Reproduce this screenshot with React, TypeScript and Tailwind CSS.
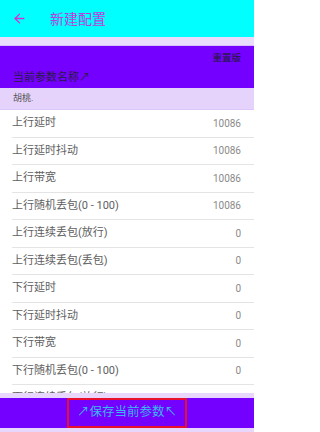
import { ArrowLeft } from "lucide-react";

const rows: [string, string][] = [
  ["上行延时", "10086"],
  ["上行延时抖动", "10086"],
  ["上行带宽", "10086"],
  ["上行随机丢包(0 - 100)", "10086"],
  ["上行连续丢包(放行)", "0"],
  ["上行连续丢包(丢包)", "0"],
  ["下行延时", "0"],
  ["下行延时抖动", "0"],
  ["下行带宽", "0"],
  ["下行随机丢包(0 - 100)", "0"],
  ["下行连续丢包(放行)", "0"],
];

export default function App() {
  return (
    <div
      className="w-[254px] h-[432px] flex flex-col bg-white overflow-hidden"
      style={{ fontFamily: "Roboto, 'Noto Sans CJK SC', sans-serif" }}
    >
      {/* toolbar */}
      <div className="h-[37px] shrink-0 bg-[#00ffff] flex items-center">
        <ArrowLeft size={15} strokeWidth={2.2} className="ml-[12px] text-[#d62ed6]" />
        <span className="ml-[23px] text-[14px] text-[#b83ee0] leading-none">新建配置</span>
      </div>
      <div className="h-[9px] shrink-0 bg-[#eadcfd] border-b border-[#d7c0fb]" />

      {/* name block */}
      <div className="h-[42px] shrink-0 bg-[#7400ff] flex flex-col px-[13px]">
        <div className="self-end mt-[7px] text-[9.5px] leading-none text-[#1c1c30]">重置版</div>
        <div className="mt-[9px] text-[11px] leading-none text-[#2a1d44]">当前参数名称↗</div>
      </div>
      <div className="h-[22px] shrink-0 bg-[#e6d3fc] border-b border-[#dcc6fa] flex items-center px-[13px] text-[9px] text-[#555]">
        胡桃.
      </div>

      {/* list */}
      <div className="flex-1 overflow-hidden">
        {rows.map(([label, value], i) => (
          <div
            key={i}
            className="h-[27.5px] ml-[12px] pr-[13px] flex items-center justify-between border-b border-[#e4e4e4]"
          >
            <span className="text-[11px] text-[#606060]">{label}</span>
            <span className="text-[10px] text-[#8a8a8a]">{value}</span>
          </div>
        ))}
      </div>

      {/* bottom bar */}
      <div className="h-[39px] shrink-0 bg-[#e8d6fc] flex flex-col justify-center">
        <div className="h-[30px] bg-[#7400ff] flex justify-center">
          <div className="w-[120px] h-full border-2 border-[#e8102c] flex items-center justify-center text-[12.5px] text-[#3ab8f5]">
            ↗保存当前参数↖
          </div>
        </div>
      </div>
    </div>
  );
}
